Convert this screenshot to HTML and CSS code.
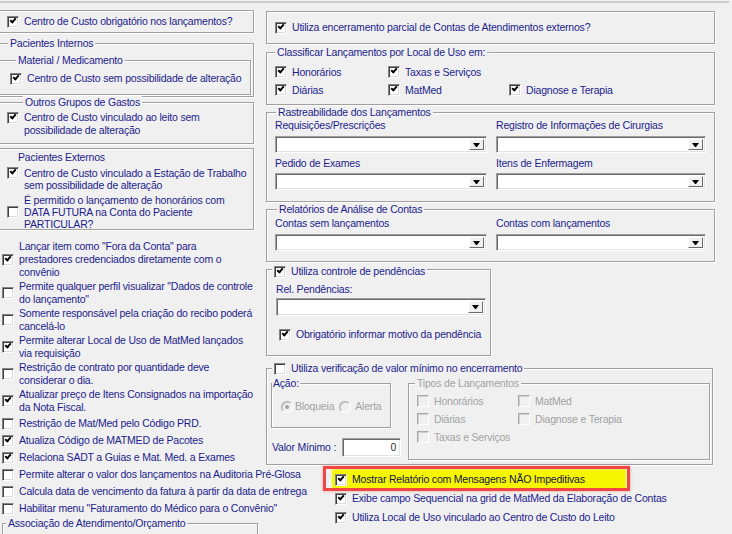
FILE: index.html
```html
<!DOCTYPE html>
<html lang="pt-BR">
<head>
    <meta charset="UTF-8">
    <title>Parâmetros de Faturamento</title>
    <link rel="stylesheet" href="styles.css">
</head>
<body>
    <div class="top-rule"></div>
    <div class="page">
        <!-- coluna esquerda -->
        <div class="col-left">
            <div class="frame box-a">
                <div class="chk"><span class="box on"></span>Centro de Custo obrigatório nos lançamentos?</div>
            </div>

            <div class="frame internos">
                <div class="cap">Pacientes Internos</div>
                <div class="frame material">
                    <div class="cap">Material / Medicamento</div>
                    <div class="chk row17"><span class="box on"></span>Centro de Custo sem possibilidade de alteração</div>
                </div>
            </div>

            <div class="frame outros">
                <div class="cap">Outros Grupos de Gastos</div>
                <div class="chk top"><span class="box on"></span><span>Centro de Custo vinculado ao leito sem<br>possibilidade de alteração</span></div>
            </div>

            <div class="frame externos">
                <div class="lbl">Pacientes Externos</div>
                <div class="chk top ext1"><span class="box on"></span><span>Centro de Custo vinculado a Estação de Trabalho<br>sem possibilidade de alteração</span></div>
                <div class="chk ext2"><span class="box"></span><span>É permitido o lançamento de honorários com<br>DATA FUTURA na Conta do Paciente<br>PARTICULAR?</span></div>
            </div>

            <div class="opts">
                <div class="chk multi"><span class="box on"></span><span>Lançar item como "Fora da Conta" para<br>prestadores credenciados diretamente com o<br>convênio</span></div>
                <div class="chk multi"><span class="box"></span><span>Permite qualquer perfil visualizar "Dados de controle<br>do lançamento"</span></div>
                <div class="chk multi"><span class="box"></span><span>Somente responsável pela criação do recibo poderá<br>cancelá-lo</span></div>
                <div class="chk multi"><span class="box on"></span><span>Permite alterar Local de Uso de MatMed lançados<br>via requisição</span></div>
                <div class="chk multi"><span class="box"></span><span>Restrição de contrato por quantidade deve<br>considerar o dia.</span></div>
                <div class="chk multi"><span class="box on"></span><span>Atualizar preço de Itens Consignados na importação<br>da Nota Fiscal.</span></div>
                <div class="chk row17"><span class="box"></span>Restrição de Mat/Med pelo Código PRD.</div>
                <div class="chk row17"><span class="box on"></span>Atualiza Código de MATMED de Pacotes</div>
                <div class="chk row17"><span class="box on"></span>Relaciona SADT a Guias e Mat. Med. a Exames</div>
                <div class="chk row17"><span class="box"></span>Permite alterar o valor dos lançamentos na Auditoria Pré-Glosa</div>
                <div class="chk row17"><span class="box"></span>Calcula data de vencimento da fatura à partir da data de entrega</div>
                <div class="chk row17"><span class="box"></span>Habilitar menu "Faturamento do Médico para o Convênio"</div>
            </div>

            <div class="frame assoc">
                <div class="cap">Associação de Atendimento/Orçamento</div>
            </div>
        </div>

        <!-- coluna direita -->
        <div class="col-right">
            <div class="frame box-r1">
                <div class="chk"><span class="box on"></span>Utiliza encerramento parcial de Contas de Atendimentos externos?</div>
            </div>

            <div class="frame classif">
                <div class="cap">Classificar Lançamentos por Local de Uso em:</div>
                <div class="grid3">
                    <div class="chk"><span class="box on"></span>Honorários</div>
                    <div class="chk"><span class="box on"></span>Taxas e Serviços</div>
                    <div></div>
                    <div class="chk"><span class="box on"></span>Diárias</div>
                    <div class="chk"><span class="box on"></span>MatMed</div>
                    <div class="chk"><span class="box on"></span>Diagnose e Terapia</div>
                </div>
            </div>

            <div class="frame rastre">
                <div class="cap">Rastreabilidade dos Lançamentos</div>
                <div class="grid2">
                    <div class="field">
                        <div>Requisições/Prescrições</div>
                        <div class="combo"><span class="drop"></span></div>
                    </div>
                    <div class="field">
                        <div>Registro de Informações de Cirurgias</div>
                        <div class="combo"><span class="drop"></span></div>
                    </div>
                    <div class="field second">
                        <div>Pedido de Exames</div>
                        <div class="combo"><span class="drop"></span></div>
                    </div>
                    <div class="field second">
                        <div>Itens de Enfermagem</div>
                        <div class="combo"><span class="drop"></span></div>
                    </div>
                </div>
            </div>

            <div class="frame relat">
                <div class="cap">Relatórios de Análise de Contas</div>
                <div class="grid2">
                    <div class="field">
                        <div>Contas sem lançamentos</div>
                        <div class="combo"><span class="drop"></span></div>
                    </div>
                    <div class="field">
                        <div>Contas com lançamentos</div>
                        <div class="combo"><span class="drop"></span></div>
                    </div>
                </div>
            </div>

            <div class="frame pend">
                <div class="cap cap-chk"><div class="chk"><span class="box on"></span>Utiliza controle de pendências</div></div>
                <div class="pend-lbl">Rel. Pendências:</div>
                <div class="combo pend-combo"><span class="drop"></span></div>
                <div class="chk row17 pend-obr"><span class="box on"></span>Obrigatório informar motivo da pendência</div>
            </div>

            <div class="frame valmin">
                <div class="cap cap-chk"><div class="chk"><span class="box"></span>Utiliza verificação de valor mínimo no encerramento</div></div>
                <div class="valmin-body">
                    <div class="valmin-left">
                        <div class="frame acao">
                            <div class="cap">Ação:</div>
                            <div class="radios">
                                <span class="radio on"></span><span class="off">Bloqueia</span>
                                <span class="radio"></span><span class="off">Alerta</span>
                            </div>
                        </div>
                        <div class="valor">
                            <span>Valor Mínimo :</span>
                            <span class="num">0</span>
                        </div>
                    </div>
                    <div class="frame tipos">
                        <div class="cap off">Tipos de Lançamentos</div>
                        <div class="grid-tipos">
                            <div class="chk off"><span class="box dis"></span>Honorários</div>
                            <div class="chk off"><span class="box dis"></span>MatMed</div>
                            <div class="chk off"><span class="box dis"></span>Diárias</div>
                            <div class="chk off"><span class="box dis"></span>Diagnose e Terapia</div>
                            <div class="chk off"><span class="box dis"></span>Taxas e Serviços</div>
                        </div>
                    </div>
                </div>
            </div>

            <div class="bottom-opts">
                <div class="chk mark"><span class="box on"></span>Mostrar Relatório com Mensagens NÃO Impeditivas</div>
                <div class="chk row19"><span class="box on"></span>Exibe campo Sequencial na grid de MatMed da Elaboração de Contas</div>
                <div class="chk row19"><span class="box on"></span>Utiliza Local de Uso vinculado ao Centro de Custo do Leito</div>
            </div>
        </div>
    </div>
</body>
</html>
```

FILE: styles.css
```css
body {
    margin: 0;
    background-color: #f0f0f0;
    font-family: "Liberation Sans", Arial, sans-serif;
    font-size: 10.5px;
    letter-spacing: -0.2px;
    line-height: 13px;
    color: #1c1c8c;
    overflow: hidden;
    height: 534px;
}
.top-rule {
    width: 729px;
    height: 2px;
    margin-top: 1px;
    background-color: #cdcdcd;
}
.page {
    display: flex;
    align-items: flex-start;
}
.col-left {
    width: 257px;
    margin-left: -3px;
    flex: none;
}
.col-right {
    width: 449px;
    margin-left: 12px;
    flex: none;
}

/* caixas de grupo */
.frame {
    border: 1px solid #a0a0a0;
    box-shadow: inset 1px 1px 0 #fff, 1px 1px 0 #fff;
}
.cap {
    width: fit-content;
    margin-top: -7px;
    padding: 0 2px;
    background-color: #f0f0f0;
    white-space: nowrap;
}
.off {
    color: #a3a3a3;
}

/* checkbox */
.chk {
    display: flex;
    align-items: center;
    white-space: nowrap;
}
.chk.top {
    align-items: flex-start;
}
.box {
    position: relative;
    flex: none;
    width: 12px;
    height: 12px;
    box-sizing: border-box;
    margin-right: 5px;
    background-color: #fff;
    border: 1px solid;
    border-color: #848484 #fff #fff #848484;
    box-shadow: inset 1px 1px 0 #404040, inset -1px -1px 0 #dcdcdc;
}
.box.on::after {
    content: '';
    position: absolute;
    left: 2px;
    top: 1px;
    width: 4px;
    height: 2px;
    border-left: 2px solid #000;
    border-bottom: 2px solid #000;
    transform: rotate(-48deg);
}
.box.dis {
    background-color: #f0f0f0;
    border-color: #a8a8a8 #fff #fff #a8a8a8;
    box-shadow: inset 1px 1px 0 #d0d0d0;
}
.row17 {
    height: 17px;
}
.row19 {
    height: 19px;
}

/* coluna esquerda */
.box-a {
    height: 23px;
    box-sizing: border-box;
    margin-top: 7px;
    padding-left: 9px;
    display: flex;
    align-items: center;
}
.internos {
    margin-top: 10px;
}
.internos > .cap {
    margin-left: 10px;
}
.material {
    margin: 10px 2px 1px 0;
    padding: 0 0 7px 11px;
}
.material > .cap {
    margin-left: 6px;
}
.material .chk {
    margin-top: 3px;
}
.outros {
    margin-top: 5px;
    padding: 0 0 6px 9px;
}
.outros > .cap {
    margin-left: 16px;
}
.outros .chk {
    margin-top: 2px;
}
.outros .box {
    margin-top: 1px;
}
.externos {
    margin-top: 4px;
    padding: 2px 0 0 9px;
    height: 82px;
    box-sizing: border-box;
    line-height: 12px;
}
.externos .lbl {
    margin-left: 11px;
    line-height: 13px;
}
.ext1 {
    margin-top: 3px;
}
.ext2 {
    margin-top: 3px;
}
.opts {
    margin-top: 10px;
    padding-left: 5px;
}
.opts .multi {
    margin-bottom: 1px;
}
.assoc {
    margin: 6px 0 0 5px;
    width: 256px;
    height: 40px;
    box-sizing: border-box;
}
.assoc > .cap {
    margin-left: 3px;
}

/* coluna direita */
.box-r1 {
    height: 33px;
    box-sizing: border-box;
    margin-top: 8px;
    padding-left: 8px;
    display: flex;
    align-items: center;
}
.classif {
    margin-top: 8px;
    padding: 0 0 5px 8px;
}
.classif > .cap {
    margin-left: 0;
}
.grid3 {
    display: grid;
    grid-template-columns: 113px 121px auto;
    grid-auto-rows: 18px;
    margin-top: 4px;
}
.rastre {
    margin-top: 7px;
    padding: 0 0 11px 8px;
}
.rastre > .cap {
    margin-left: 1px;
}
.relat {
    margin-top: 7px;
    padding: 0 0 10px 8px;
}
.relat > .cap {
    margin-left: 2px;
}
.relat .grid2 {
    margin-top: 1px;
}
.grid2 {
    display: grid;
    grid-template-columns: 212px 210px;
    column-gap: 9px;
}
.field .combo {
    margin-top: 4px;
}
.field.second {
    margin-top: 4px;
}
.field.second .combo {
    margin-top: 3px;
}

/* combobox */
.combo {
    height: 17px;
    box-sizing: border-box;
    padding: 2px;
    display: flex;
    justify-content: flex-end;
    background-color: #fff;
    border: 1px solid;
    border-color: #a0a0a0 #fff #fff #a0a0a0;
    box-shadow: inset 1px 1px 0 #696969, inset -1px -1px 0 #e3e3e3;
}
.drop {
    width: 15px;
    box-sizing: border-box;
    background-color: #f0f0f0;
    border: 1px solid;
    border-color: #fff #6a6a6a #6a6a6a #fff;
    display: flex;
    align-items: center;
    justify-content: center;
}
.drop::before {
    content: '';
    width: 1px;
    border-left: 3px solid transparent;
    border-right: 3px solid transparent;
    border-top: 4px solid #000;
}

.pend {
    width: 225px;
    box-sizing: border-box;
    margin-top: 7px;
    padding: 0 0 12px 9px;
}
.cap-chk {
    margin-top: -5px;
    margin-left: -4px;
}
.pend-lbl {
    margin-top: 5px;
}
.pend-combo {
    width: 210px;
    height: 18px;
    margin-top: 2px;
}
.pend-obr {
    margin: 10px 0 0 3px;
}

.valmin {
    margin-top: 12px;
    width: 447px;
    box-sizing: border-box;
    padding: 0 0 4px 4px;
}
.valmin > .cap-chk {
    margin-top: -7px;
    margin-left: 1px;
}
.valmin-body {
    display: flex;
    align-items: flex-start;
}
.valmin-left {
    width: 137px;
    flex: none;
}
.acao {
    width: 120px;
    height: 45px;
    box-sizing: border-box;
    margin-top: 8px;
    padding-left: 9px;
}
.acao > .cap {
    padding: 0 1px;
    margin-left: -9px;
}
.radios {
    display: flex;
    align-items: center;
    margin-top: 10px;
}
.radio {
    position: relative;
    width: 12px;
    height: 12px;
    box-sizing: border-box;
    border-radius: 50%;
    border: 1px solid;
    border-color: #a8a8a8 #fff #fff #a8a8a8;
    box-shadow: inset 1px 1px 0 #cfcfcf;
    background-color: #f0f0f0;
    margin-right: 2px;
    display: flex;
    align-items: center;
    justify-content: center;
}
.radio.on::after {
    content: '';
    width: 4px;
    height: 4px;
    border-radius: 50%;
    background-color: #a0a0a0;
}
.radios .off + .radio {
    margin-left: 5px;
    margin-right: 4px;
}
.valor {
    display: flex;
    align-items: center;
    margin-top: 10px;
    padding-left: 1px;
}
.num {
    width: 59px;
    height: 19px;
    box-sizing: border-box;
    margin-left: 6px;
    padding: 2px 4px 0 0;
    text-align: right;
    color: #333;
    background-color: #fff;
    border: 1px solid;
    border-color: #a0a0a0 #fff #fff #a0a0a0;
    box-shadow: inset 1px 1px 0 #696969, inset -1px -1px 0 #e3e3e3;
}
.tipos {
    width: 302px;
    height: 77px;
    box-sizing: border-box;
    margin-top: 8px;
    padding-left: 8px;
}
.tipos > .cap {
    margin-left: -2px;
}
.grid-tipos {
    display: grid;
    grid-template-columns: 101px auto;
    grid-auto-rows: 18px;
    margin-top: 2px;
}

.bottom-opts {
    margin-top: 5px;
}
.bottom-opts .chk {
    padding-left: 69px;
}
.bottom-opts .chk.mark {
    position: relative;
    height: 19px;
    width: 292px;
    box-sizing: border-box;
    margin-left: 67px;
    padding-left: 2px;
    color: #141448;
    background-color: #f6f600;
    box-shadow: 0 0 2px 1px #f6f600;
}
/* marcação vermelha por cima da captura */
.mark::after {
    content: '';
    position: absolute;
    left: -10px;
    top: -4px;
    right: -5px;
    bottom: -2px;
    border: 3px solid #ef4646;
    box-shadow: 0 0 3px rgba(239, 70, 70, 0.45);
}
```
